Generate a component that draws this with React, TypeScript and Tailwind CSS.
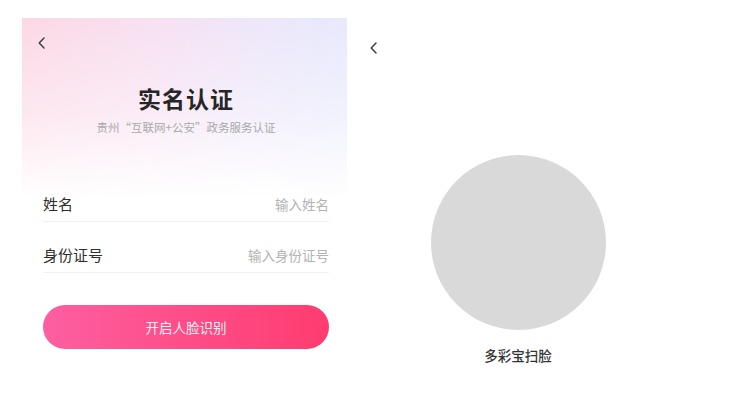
const cjk = "font-['Noto_Sans_CJK_SC','Noto_Sans',sans-serif]";

function BackIcon() {
  return (
    <svg width="7" height="12" viewBox="0 0 7 12" fill="none">
      <polyline
        points="6,1 1.2,6 6,11"
        stroke="#3a3a3a"
        strokeWidth="1.4"
        strokeLinecap="round"
        strokeLinejoin="round"
      />
    </svg>
  );
}

interface FieldRowProps {
  label: string;
  placeholder: string;
}

function FieldRow({ label, placeholder }: FieldRowProps) {
  return (
    <div className="flex items-center justify-between border-b border-[#f1f1f1] pt-[22px] pb-[6px] leading-[22px]">
      <span className="text-[15px] text-[#2d2d2d]">{label}</span>
      <span className="text-[13.5px] text-[#b3b3b3]">{placeholder}</span>
    </div>
  );
}

export default function App() {
  return (
    <div className={`flex h-[413px] w-[739px] gap-[8px] overflow-hidden bg-white pl-[22px] pt-[18px] ${cjk}`}>
      {/* 实名认证 */}
      <div className="flex w-[325px] flex-col bg-[linear-gradient(180deg,rgba(255,255,255,0)_0px,rgba(255,255,255,0.4)_95px,#fff_180px),linear-gradient(90deg,#fcd8e5_0%,#f7e0f1_40%,#eee6f9_70%,#e7e9fc_100%)] bg-no-repeat">
        <div className="flex h-[50px] items-center pl-[16px]">
          <BackIcon />
        </div>
        <h1 className="mt-[15px] pl-[3px] text-center text-[23px] font-bold leading-[30px] tracking-[1px] text-[#262626]">
          实名认证
        </h1>
        <p className="mt-[6px] pl-[3px] text-center text-[11.5px] leading-[16px] text-[#a9a9a9]">
          贵州“互联网+公安”政务服务认证
        </p>

        <div className="mt-[36px] flex flex-col pl-[21px] pr-[18px]">
          <FieldRow label="姓名" placeholder="输入姓名" />
          <FieldRow label="身份证号" placeholder="输入身份证号" />
        </div>

        <button className="mt-[32px] ml-[21px] mr-[18px] flex h-[44px] items-center justify-center rounded-full bg-[linear-gradient(90deg,#fd5fa0,#ff3c70)] text-[13.5px] text-white/95">
          开启人脸识别
        </button>
      </div>

      {/* 多彩宝扫脸 */}
      <div className="flex w-[326px] flex-col items-center">
        <div className="flex h-[60px] items-center self-stretch pl-[15px]">
          <BackIcon />
        </div>
        <div className="mt-[77px] h-[175px] w-[175px] rounded-full bg-[#d9d9d9]" />
        <p className="mt-[16px] text-[13.5px] font-medium leading-[18px] text-[#333]">
          多彩宝扫脸
        </p>
      </div>
    </div>
  );
}
